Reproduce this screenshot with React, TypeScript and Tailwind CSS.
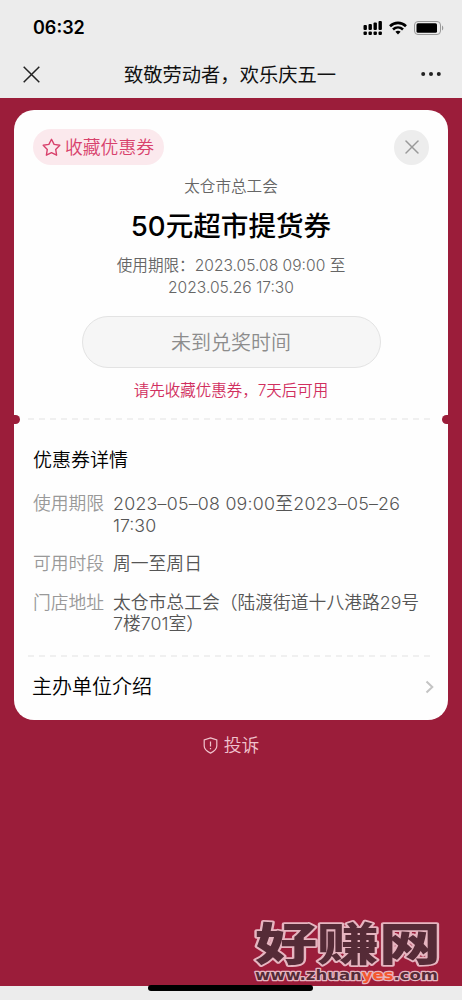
import { FiX } from "react-icons/fi";

interface IDetailRow {
  label: string;
  lines: string[];
}

const details: IDetailRow[] = [
  { label: "使用期限", lines: ["2023–05–08 09:00至2023–05–26", "17:30"] },
  { label: "可用时段", lines: ["周一至周日"] },
  { label: "门店地址", lines: ["太仓市总工会（陆渡街道十八港路29号", "7楼701室）"] },
];

const signalBars = [5, 6, 7.5, 9];

const StatusBar = () => (
  <div className="flex h-[50px] items-center justify-between pt-[5px] pr-[18px] pl-[33px]">
    <span className="text-[18px] font-semibold text-black">06:32</span>
    <div className="flex items-center gap-[6px]">
      <svg width="20" height="16" viewBox="0 0 20 16">
        {signalBars.map((h, i) => (
          <g key={h}>
            <rect x={i * 5 + 0.5} y={10 - h} width="3.4" height={h} rx="1" />
            <rect x={i * 5 + 0.5} y="11.5" width="3.4" height="3.5" rx="1" />
          </g>
        ))}
      </svg>
      <svg width="18" height="14" viewBox="0 0 18 14" fill="none" stroke="#000" strokeWidth="2.6">
        <path d="M1 5.2C5.6 .8 12.4 .8 17 5.2" />
        <path d="M4 8.5c2.9-2.7 7.1-2.7 10 0" />
        <path d="M6.4 10.8c1.5-1.3 3.7-1.3 5.2 0L9 13.5z" fill="#000" stroke="none" />
      </svg>
      <svg width="31" height="16" viewBox="0 0 31 16">
        <rect x="1.5" y="1.5" width="26" height="13" rx="3.5" fill="none" stroke="#999" />
        <rect x="3.5" y="3.2" width="20.5" height="9.6" rx="1.5" />
        <path d="M29 5.5c1.7.8 1.7 4.2 0 5z" fill="#999" />
      </svg>
    </div>
  </div>
);

const NavBar = () => (
  <div className="flex h-12 items-center justify-between pr-[21px] pl-[23px]">
    <svg width="17" height="17" viewBox="0 0 17 17" stroke="#222" strokeWidth="1.5">
      <path d="M.7.7l15.6 15.6M16.3.7L.7 16.3" />
    </svg>
    <h1 className="pt-[2px] pr-px text-[19.3px] font-normal text-[#111]">致敬劳动者，欢乐庆五一</h1>
    <svg width="20" height="6" viewBox="0 0 20 6" fill="#222">
      <circle cx="2.2" cy="3" r="2" />
      <circle cx="10" cy="3" r="2" />
      <circle cx="17.8" cy="3" r="2" />
    </svg>
  </div>
);

const DashedLine = () => (
  <svg className="block" width="406" height="2" viewBox="0 0 406 2">
    <path d="M0 1h406" stroke="#ebebeb" strokeWidth="1.4" strokeDasharray="6 5" />
  </svg>
);

const Coupon = () => (
  <div className="flex flex-col items-center">
    <div className="flex w-full items-center justify-between px-[19px] pt-[19px]">
      <button className="flex h-9 w-[131px] items-center justify-center gap-[4px] rounded-full bg-[#fbe9ed] pr-px text-[17.8px] font-[350] text-[#d8416c]">
        <svg width="19" height="19" viewBox="0 0 19 19" fill="none" stroke="currentColor" strokeWidth="1.4" strokeLinejoin="round">
          <path d="M9.5 1.3l2.6 5.1 5.7.9-4.1 4.1.9 5.8-5.1-2.6-5.1 2.6.9-5.8L1.2 7.3l5.7-.9z" />
        </svg>
        <span className="pt-[2px]">收藏优惠券</span>
      </button>
      <button className="flex size-[35px] items-center justify-center rounded-full bg-[#ededed] text-[#999]">
        <FiX size={24} strokeWidth={1.5} />
      </button>
    </div>
    <p className="mt-[10px] h-[24px] text-[15.6px] leading-[24px] font-[350] text-[#666]">太仓市总工会</p>
    <h2 className="mt-[7px] h-[40px] text-[27.6px] leading-[40px] font-medium text-black">50元超市提货券</h2>
    <div className="mt-[9px] text-center text-[15.6px] leading-[22px] font-[350] text-[#666]">
      <p>使用期限：2023.05.08 09:00 至</p>
      <p>2023.05.26 17:30</p>
    </div>
    <button className="mt-[17px] h-[52px] w-[299px] rounded-full border border-[#e3e3e3] bg-[#f6f6f6] pt-[2px] text-[20px] font-[350] text-[#8c8c8c]">
      未到兑奖时间
    </button>
    <p className="mt-[11px] h-[24px] text-[15.5px] leading-[24px] font-[350] text-[#d12f5f]">请先收藏优惠券，7天后可用</p>
  </div>
);

const Watermark = () => (
  <svg className="absolute right-[19px] bottom-[13px]" width="194" height="70" viewBox="0 0 194 70">
    <g fill="#552b37" stroke="#e6b5c0" strokeWidth="3.5" strokeLinejoin="round" paintOrder="stroke">
      <text x="6" y="44" fontSize="45" fontWeight="900" textLength="186" lengthAdjust="spacingAndGlyphs">
        好赚网
      </text>
      <text x="6" y="63" fontSize="14.5" fontWeight="700" textLength="183" lengthAdjust="spacingAndGlyphs" strokeWidth="2.5" fontFamily="DejaVu Sans">
        www.zhuan<tspan fill="#f4572f">yes</tspan>.com
      </text>
    </g>
  </svg>
);

const App = () => {
  return (
    <div className="relative flex h-[1000px] w-[462px] flex-col overflow-hidden bg-[#ececec] font-['Inter','Noto_Sans_CJK_SC',sans-serif]">
      <StatusBar />
      <NavBar />

      <main className="h-[888px] bg-[#9b1d3a] px-[14px] pt-[12px]">
        <div className="h-[610px] overflow-hidden rounded-[20px] bg-[#fefefe]">
          <Coupon />

          {/* ticket notches on both edges */}
          <div className="mt-[11px] flex h-[10px] items-center justify-between">
            <span className="h-[9px] w-[6px] rounded-r-full bg-[#9b1d3a]" />
            <DashedLine />
            <span className="h-[9px] w-[6px] rounded-l-full bg-[#9b1d3a]" />
          </div>

          <div className="px-[19px]">
            <h3 className="mt-[22px] h-[30px] text-[19px] leading-[30px] font-[350] text-black">优惠券详情</h3>
            <div className="mt-[17px] flex flex-col gap-[17px] text-[17.8px] leading-[21.5px] font-[350]">
              {details.map((row) => (
                <div key={row.label} className="flex gap-[9px]">
                  <span className="w-[71px] shrink-0 whitespace-nowrap text-[#999]">{row.label}</span>
                  <div className="whitespace-nowrap text-[#555]">
                    {row.lines.map((line) => (
                      <p key={line} className={/^20/.test(line) ? "tracking-[0.24px]" : ""}>
                        {line}
                      </p>
                    ))}
                  </div>
                </div>
              ))}
            </div>
          </div>

          <div className="mt-[20px] flex justify-center">
            <DashedLine />
          </div>
          <div className="mt-[14px] flex h-[32px] items-center justify-between pr-[14px] pl-[18px]">
            <h3 className="text-[20px] font-[350] text-black">主办单位介绍</h3>
            <svg width="9" height="14" viewBox="0 0 9 14" fill="none" stroke="#c4c4c4" strokeWidth="2">
              <path d="M1.5 1.5L7.3 7l-5.8 5.5" />
            </svg>
          </div>
        </div>

        <div className="mt-[12px] flex h-[26px] items-center justify-center gap-[6px] text-[17.8px] font-[350] text-[#f0c3cd]">
          <svg width="15" height="17" viewBox="0 0 15 17" fill="none" stroke="currentColor" strokeWidth="1.2">
            <path d="M7.5.9l6.3 2v6c0 3.2-2.4 5.2-6.3 7.2C3.6 14.1 1.2 12.1 1.2 8.9v-6z" />
            <path d="M7.5 4.5v5M7.5 11v1.3" />
          </svg>
          <span className="pt-[3px]">投诉</span>
        </div>
      </main>

      <Watermark />
      <div className="absolute bottom-[9px] left-[148px] h-[6px] w-[165px] rounded-full bg-black" />
    </div>
  );
};

export default App;
